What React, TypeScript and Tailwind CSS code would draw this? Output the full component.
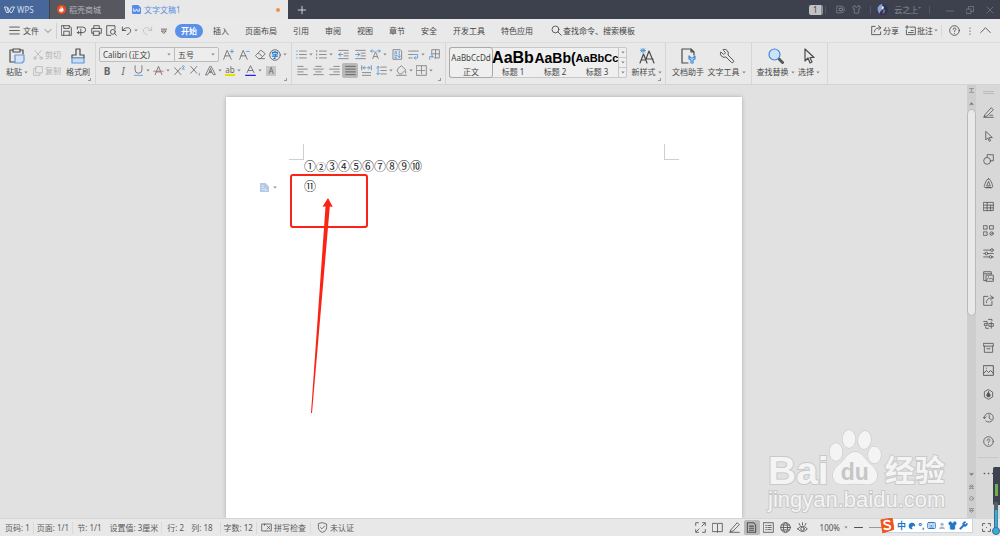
import React from "react";
import { Wrench, Shirt, Keyboard, Moon, User } from "lucide-react";

type Kids = { children?: React.ReactNode };

function Glyph({ className = "size-[11px]", children }: Kids & { className?: string }) {
  return (
    <svg
      viewBox="0 0 16 16"
      className={`shrink-0 ${className}`}
      fill="none"
      stroke="currentColor"
      strokeWidth="1.2"
      strokeLinecap="round"
      strokeLinejoin="round"
      aria-hidden="true"
    >
      {children}
    </svg>
  );
}

function Caret() {
  return (
    <svg viewBox="0 0 6 4" className="h-[3px] w-1 shrink-0" fill="#888" aria-hidden="true">
      <path d="M0.5 0.5h5L3 3.6z" />
    </svg>
  );
}

const BLUE = "#4d94dc";

function Tool({ label, caret, active, children }: Kids & { label: string; caret?: boolean; active?: boolean }) {
  return (
    <button
      aria-label={label}
      className={`flex h-[15px] shrink-0 items-center justify-center gap-0.5 ${caret ? "w-5" : "w-4"} ${active ? "rounded-xs bg-[#b9b9b9]" : ""}`}
    >
      {children}
      {caret && <Caret />}
    </button>
  );
}

function BigTool({ label, caret, className, children }: Kids & { label: string; caret?: boolean; className: string }) {
  return (
    <button className={`flex shrink-0 flex-col items-center gap-0.5 pt-[5px] text-[#4a4a4a] ${className}`}>
      {children}
      <span className="flex items-center gap-0.5 leading-3 whitespace-nowrap">
        {label}
        {caret && <Caret />}
      </span>
    </button>
  );
}

function Corner() {
  return <span className="absolute right-1 bottom-[3px] size-[3px] border-r border-b border-[#999]" />;
}

function TitleBar() {
  return (
    <header className="flex h-[19px] shrink-0 items-stretch bg-[#3d404d] text-[8px]">
      <button className="flex w-[49px] items-center gap-0.5 bg-[#47679b] pl-1 text-[#d4dcea]">
        <svg viewBox="0 0 22 16" className="h-2 w-[11px]" fill="none" stroke="currentColor" strokeWidth="2" aria-hidden="true">
          <path d="M1 2h5l3 11 6-11h6l-5 11h-3L7 2M1 2l4 11h4" />
        </svg>
        <span className="text-[8px]">WPS</span>
      </button>
      <button className="ml-px flex w-[75px] items-center gap-[3px] bg-[#56575f] pl-[7px] text-[#b5b5b8]">
        <svg viewBox="0 0 16 16" className="size-[9px]" aria-hidden="true">
          <circle cx="8" cy="8" r="8" fill="#f04a1c" />
          <path d="M8 2c1 2-1 3 0 5 1-1 1-2 2-3 2 3 3 9-2 9S3 9 5 6c0 1 1 2 1 2C6 6 6 4 8 2z" fill="#fff" />
          <path d="M4 11q4 4 8 0" stroke="#f04a1c" fill="none" />
        </svg>
        稻壳商城
      </button>
      <button className="flex w-[163px] items-center gap-[3px] bg-[#e8e8e8] pr-2 pl-[7px] text-[#5e8de0]">
        <svg viewBox="0 0 16 16" className="size-[9px]" aria-hidden="true">
          <path d="M2 0h9l5 5v9a2 2 0 0 1-2 2H2a2 2 0 0 1-2-2V2a2 2 0 0 1 2-2z" fill="#568bea" />
          <path d="M3 6v5h3l2-4 2 4h3V6" stroke="#fff" strokeWidth="1.5" fill="none" />
        </svg>
        <span className="grow text-left">文字文稿1</span>
        <span className="size-1 rounded-full bg-[#e99443]" />
      </button>
      <button aria-label="新建标签" className="flex w-[27px] items-center justify-center text-[#d0d0d4]">
        <Glyph className="size-2.5">
          <path d="M8 2v12M2 8h12" strokeWidth="1.6" />
        </Glyph>
      </button>
      <div className="ml-auto flex items-center text-[#898b94]">
        <span className="flex h-[10px] w-[14px] items-center justify-center rounded-xs border-r-2 border-[#8d8e95] bg-[#c2c2c4] text-[8px] text-[#444]">1</span>
        <span className="ml-0.5 h-2 w-px bg-[#555863]" />
        <button aria-label="稻壳" className="ml-1.5 flex w-4 justify-center">
          <Glyph className="size-[9px]">
            <path d="M2 2h7a6 6 0 0 1 0 12H2zM5 6h5M5 10h5" />
            <circle cx="9" cy="8" r="3" />
          </Glyph>
        </button>
        <button aria-label="皮肤" className="flex w-4 justify-center">
          <Shirt className="size-[9px]" />
        </button>
        <span className="mx-1.5 h-2 w-px bg-[#555863]" />
        <button className="flex items-center gap-1.5">
          <svg viewBox="0 0 16 16" className="size-[11px]" aria-hidden="true">
            <circle cx="8" cy="8" r="8" fill="#27365e" />
            <path d="M1 5q3-5 7-5-2 4 0 8-4 2-4 6Q0 11 1 5z" fill="#8ba3d0" />
            <path d="M7 3l3 1-1 4-2-1z" fill="#fff" />
            <path d="M9 7l3 2-1 4-3 1z" fill="#a95a63" />
          </svg>
          云之上⁺
        </button>
        <span className="ml-2 h-2 w-px bg-[#555863]" />
        <div className="ml-2.5 flex">
          <button aria-label="最小化" className="flex w-5 justify-center">
            <Glyph className="size-2"><path d="M1 10h14" /></Glyph>
          </button>
          <button aria-label="还原" className="flex w-5 justify-center">
            <Glyph className="size-2"><path d="M1 6h9v9H1zM5 6V1h10v10h-5" /></Glyph>
          </button>
          <button aria-label="关闭" className="flex w-5 justify-center">
            <Glyph className="size-2"><path d="M2 2l12 12M14 2L2 14" /></Glyph>
          </button>
        </div>
      </div>
    </header>
  );
}

const tabs = ["插入", "页面布局", "引用", "审阅", "视图", "章节", "安全", "开发工具", "特色应用"];

function MenuBar() {
  return (
    <nav className="flex h-6 shrink-0 items-center border-b border-[#dcdcdc] bg-[#e9e9e9] pr-[5px] pl-[9px] text-[8px] text-[#444]">
      <button className="flex items-center gap-[3px]">
        <Glyph><path d="M1 3h14M1 8h14M1 13h14" /></Glyph>
        文件
        <Glyph className="ml-0.5 size-2"><path d="M2 5l6 6 6-6" /></Glyph>
      </button>
      <span className="mx-1 h-4 w-px bg-[#d0d0d0]" />
      <div className="flex items-center gap-1">
        <button aria-label="保存">
          <Glyph><path d="M1 1h11l3 3v11H1zM4 1v4h8V1M4 15V9h8v6" /></Glyph>
        </button>
        <button aria-label="输出为PDF">
          <Glyph><path d="M2 3h8a4 4 0 0 1 0 8H7M7 6v9M2 3v3M4 9L2 11l2 2M2 11h5" /></Glyph>
        </button>
        <button aria-label="打印">
          <Glyph><path d="M4 5V1h8v4M4 12H1V5h14v7h-3M4 9h8v6H4z" /></Glyph>
        </button>
        <button aria-label="打印预览">
          <Glyph><path d="M7 15H1V1h12v5M12.500 12.500L15 15" /><circle cx="10" cy="10" r="3.500" /></Glyph>
        </button>
        <button aria-label="撤销" className="flex items-center gap-0.5">
          <Glyph><path d="M2 3v5h5M2 8c4-6 13-5 12 1-1 3-3 4-5 5" /></Glyph>
          <Caret />
        </button>
        <button aria-label="恢复" className="text-[#bdbdbd]">
          <Glyph><path d="M14 3v5H9M14 8C10 2 1 3 2 9c1 3 3 4 5 5" /></Glyph>
        </button>
        <button aria-label="自定义快速访问" className="flex w-2.5 justify-end">
          <Glyph className="size-1.5"><path d="M1 3h14M2 8h12l-6 6z" strokeWidth="2" /></Glyph>
        </button>
      </div>
      <button className="ml-2 h-3.5 rounded-full bg-[#5a8fea] px-1.5 text-[8px] font-bold text-white">开始</button>
      <div className="ml-2.5 flex gap-4">
        {tabs.map((t) => (
          <button key={t} className="whitespace-nowrap">{t}</button>
        ))}
      </div>
      <label className="ml-[18px] flex items-center gap-px">
        <Glyph><circle cx="6.500" cy="6.500" r="5" /><path d="M10 10l5 5" /></Glyph>
        <input aria-label="搜索" placeholder="查找命令、搜索模板" className="w-20 bg-transparent placeholder:text-[#444]" />
      </label>
      <div className="ml-auto flex items-center">
        <button className="flex items-center gap-px">
          <Glyph><path d="M6 2H1v12h13v-4M5 10c0-4 3-6 9-6M11 1l3.500 3L11 7" /></Glyph>
          分享
        </button>
        <button className="ml-1.5 flex items-center gap-px">
          <Glyph><path d="M7 3h8v11H2V7M1 3h4M3 1v4M5 11h7M9 8h3" /></Glyph>
          批注
          <Caret />
        </button>
        <span className="mx-[3px] h-3 w-px bg-[#d8d8d8]" />
        <button aria-label="帮助" className="px-1">
          <Glyph><circle cx="8" cy="8" r="7" /><path d="M6 6.500c0-3 4-3 4-.5 0 1.500-2 1.500-2 3.500M8 12v.2" /></Glyph>
        </button>
        <button aria-label="更多" className="px-0.5">
          <Glyph className="size-2"><path d="M8 2v.2M8 8v.2M8 14v.2" strokeWidth="2.400" /></Glyph>
        </button>
        <button aria-label="折叠功能区" className="px-1">
          <Glyph><path d="M1 11l7-7 7 7" /></Glyph>
        </button>
      </div>
    </nav>
  );
}

function ComboBox({ label, value, className }: { label: string; value: string; className: string }) {
  return (
    <label className={`flex items-center px-[3px] ${className}`}>
      <select aria-label={label} className="w-full min-w-0 appearance-none bg-transparent text-[8px] leading-3 text-[#444]">
        <option>{value}</option>
      </select>
      <Caret />
    </label>
  );
}

function FontGroup() {
  return (
    <div className="relative flex shrink-0 flex-col gap-px border-r border-[#d6d6d6] pt-1 pr-[3px] pl-[3px] text-[#666]">
      <div className="flex h-[15px] items-center">
        <div className="mr-px flex h-[15px] w-[120px] rounded-xs border border-[#bcbcbc] bg-[#ededed]">
          <ComboBox label="字体" value="Calibri (正文)" className="w-[75px] border-r border-[#bcbcbc]" />
          <ComboBox label="字号" value="五号" className="grow" />
        </div>
        <Tool label="增大字号">
          <Glyph><path d="M1 15L6 2l6 13M3 10h7" /><path d="M13 1v5M10.500 3.500h5" stroke={BLUE} /></Glyph>
        </Tool>
        <Tool label="减小字号">
          <Glyph><path d="M1 15L6 2l6 13M3 10h7" /><path d="M11 3.500h4" stroke={BLUE} /></Glyph>
        </Tool>
        <Tool label="清除格式">
          <Glyph><path d="M9 2l6 5-7 7H5L1 10zM5 6l6 5M6 14h8" /></Glyph>
        </Tool>
        <Tool label="拼音指南" caret>
          <Glyph className="size-3"><circle cx="8" cy="8" r="7" /><path d="M8 3v1.500M4.500 6.500v-2h7v2M6 7h4L8 9v3.500H6.500M4.500 9.500h7" stroke="#257bd0" strokeWidth="1.400" /></Glyph>
        </Tool>
      </div>
      <div className="flex h-[15px]">
        <Tool label="加粗"><span className="text-[10px] font-bold">B</span></Tool>
        <Tool label="倾斜"><span className="text-[10px] italic">I</span></Tool>
        <Tool label="下划线" caret>
          <Glyph><path d="M3 1v6a5 5 0 0 0 10 0V1" /><path d="M2 15h12" stroke={BLUE} /></Glyph>
        </Tool>
        <Tool label="删除线" caret>
          <Glyph><path d="M3 14L8 2l5 12M5 10h6" /><path d="M1 9h14" stroke="#d5605d" /></Glyph>
        </Tool>
        <Tool label="上标">
          <Glyph><path d="M1 4l9 10M10 4L1 14" /><path d="M12 2q3-2 3 0l-3 4h3" stroke={BLUE} /></Glyph>
        </Tool>
        <Tool label="下标">
          <Glyph><path d="M1 2l9 10M10 2L1 12" /><path d="M13.500 12v3" stroke={BLUE} /></Glyph>
        </Tool>
        <Tool label="文字效果" caret>
          <Glyph><path d="M1 14L7 2h2l6 12h-3l-1.500-3h-5L4 14zM6.500 9L8 5l1.500 4z" /></Glyph>
        </Tool>
        <Tool label="突出显示" caret>
          <span className="border-b-2 border-[#e6e000] text-[8px] leading-[9px]">ab</span>
        </Tool>
        <Tool label="字体颜色" caret>
          <Glyph><path d="M3 11L8 1l5 10M5 8h6" /><path d="M1 15h14" stroke="#2323ee" strokeWidth="2" /></Glyph>
        </Tool>
        <Tool label="字符底纹"><span className="bg-[#c6c6c6] px-0.5 text-[8px] leading-[10px]">A</span></Tool>
      </div>
      <Corner />
    </div>
  );
}

function ParagraphGroup() {
  return (
    <div className="relative flex w-[154px] shrink-0 flex-col gap-px border-r border-[#d6d6d6] px-0.5 pt-1 text-[#7a7a7a]">
      <div className="flex justify-between">
        <Tool label="项目符号" caret>
          <Glyph><path d="M5 3h10M5 8h10M5 13h10" /><path d="M1 3h1M1 8h1M1 13h1" stroke={BLUE} /></Glyph>
        </Tool>
        <Tool label="编号" caret>
          <Glyph><path d="M5 3h10M5 8h10M5 13h10M1 2v2M1 7v2M1 12v2" /></Glyph>
        </Tool>
        <Tool label="减少缩进">
          <Glyph><path d="M1 2h14M9 6h6M9 10h6M1 14h14" /><path d="M7 8H1M4 5.500L1 8l3 2.500" stroke={BLUE} /></Glyph>
        </Tool>
        <Tool label="增加缩进">
          <Glyph><path d="M1 2h14M9 6h6M9 10h6M1 14h14" /><path d="M1 8h6M4 5.500L7 8l-3 2.500" stroke={BLUE} /></Glyph>
        </Tool>
        <Tool label="字符缩放" caret>
          <Glyph><path d="M4 14L8 4l4 10M5.500 11h5" /><path d="M1 3h5M3 1L1 3l2 2M15 3h-5M13 1l2 2-2 2" stroke={BLUE} /></Glyph>
        </Tool>
        <Tool label="排序">
          <Glyph><path d="M2 1h10l2 2v12H2z" /><path d="M4 7l1.500-4L7 7M4 9h3l-3 4h3M10.500 3v9M8.500 10l2 2.500 2-2.500" stroke={BLUE} /></Glyph>
        </Tool>
        <Tool label="显示标记" caret>
          <Glyph><path d="M1 3h14M1 8h6M1 13h5" /><path d="M8 8h6v5H9M11 11l-2 2 2 2" stroke={BLUE} /></Glyph>
        </Tool>
        <Tool label="制表位">
          <Glyph><path d="M4 8V1h11v12H8M4 7h11M9.500 1v12" /><path d="M1 15v-4h5M4 9l2 2-2 2" stroke={BLUE} /></Glyph>
        </Tool>
      </div>
      <div className="flex">
        <Tool label="左对齐"><Glyph><path d="M1 2h8M1 6h14M1 10h8M1 14h14" /></Glyph></Tool>
        <Tool label="居中"><Glyph><path d="M4 2h8M1 6h14M4 10h8M1 14h14" /></Glyph></Tool>
        <Tool label="右对齐"><Glyph><path d="M7 2h8M1 6h14M7 10h8M1 14h14" /></Glyph></Tool>
        <Tool label="两端对齐" active><Glyph><path d="M1 2h14M1 6h14M1 10h14M1 14h14" stroke="#555" /></Glyph></Tool>
        <Tool label="分散对齐">
          <Glyph><path d="M1 1v6M15 1v6M2 11h12M2 15h12" /><path d="M3 4h4M9 4h4M5 2L3 4l2 2M11 2l2 2-2 2" stroke={BLUE} /></Glyph>
        </Tool>
        <Tool label="行距" caret>
          <Glyph><path d="M7 3h8M7 8h8M7 13h8" /><path d="M3 2v12M1 4l2-2 2 2M1 12l2 2 2-2" stroke={BLUE} /></Glyph>
        </Tool>
        <Tool label="底纹颜色" caret>
          <Glyph><path d="M3 5l5-4 6 6-6 6H5L2 9zM1 15h14M14 9v3" /></Glyph>
        </Tool>
        <Tool label="边框" caret>
          <Glyph><path d="M1 1h14v14H1z" /><path d="M8 2v12M2 8h12" strokeDasharray="1.500 1.500" /></Glyph>
        </Tool>
      </div>
      <Corner />
    </div>
  );
}

const styles = [
  { name: "正文", sample: "AaBbCcDd", look: "text-[8px]" },
  { name: "标题 1", sample: "AaBb", look: "text-[16px] font-bold text-black font-['Liberation_Sans',sans-serif]" },
  { name: "标题 2", sample: "AaBb(", look: "text-[14px] font-bold text-black font-['Liberation_Sans',sans-serif]" },
  { name: "标题 3", sample: "AaBbCc", look: "text-[11px] font-bold text-black font-['Liberation_Sans',sans-serif]" },
];

function StyleGroup() {
  return (
    <div className="relative flex shrink-0 gap-1 border-r border-[#d6d6d6] pr-[3px] pl-[3px]">
      <div className="mt-1 flex h-[31px] rounded-xs border border-[#c8c8c8] bg-[#efefef]">
        {styles.map((s, i) => (
          <button
            key={s.name}
            className={`flex w-[42px] flex-col items-center ${i === 0 ? "rounded-xs outline outline-[#aaa]" : ""}`}
          >
            <span className={`h-[18px] leading-[20px] whitespace-nowrap ${s.look}`}>{s.sample}</span>
            <span className="leading-[11px]">{s.name}</span>
          </button>
        ))}
        <div className="flex w-2 flex-col divide-y divide-[#c8c8c8] border-l border-[#c8c8c8]">
          <button aria-label="上一行" className="flex grow items-center justify-center"><Caret /></button>
          <button aria-label="下一行" className="flex grow items-center justify-center"><Caret /></button>
          <button aria-label="更多样式" className="flex grow items-center justify-center"><Caret /></button>
        </div>
      </div>
      <BigTool label="新样式" caret className="w-[31px]">
        <Glyph className="size-4">
          <path d="M1 15l3.500-9L8 15M2.500 12h4M7 11l3-8 5 12M8 11h6" />
          <path d="M4 0v5M1.500 2.500h5M2 1l4 3M6 1L2 4" stroke={BLUE} strokeWidth=".9" />
        </Glyph>
      </BigTool>
      <Corner />
    </div>
  );
}

function Ribbon() {
  return (
    <section className="flex h-[42px] shrink-0 border-b border-[#d4d4d4] bg-[#e9e9e9] text-[8px] text-[#444]">
      <div className="relative flex w-24 shrink-0 border-r border-[#d6d6d6] pl-1">
        <BigTool label="粘贴" caret className="w-[26px]">
          <Glyph className="size-4">
            <path d="M4 2H1v12h5M11 2h3v4M4 1h7v3H4z" />
            <path d="M6 7h9v6l-2 2H6z" stroke="#6598d8" fill="#d6e4f5" />
          </Glyph>
        </BigTool>
        <div className="flex w-8 flex-col gap-px pt-1 pl-[3px] text-[#b2b2b2]">
          <button className="flex h-[15px] items-center gap-0.5">
            <Glyph className="size-2.5"><circle cx="3" cy="13" r="2" /><circle cx="13" cy="13" r="2" /><path d="M4 11L13 1M12 11L3 1" /></Glyph>
            剪切
          </button>
          <button className="flex h-[15px] items-center gap-0.5">
            <Glyph className="size-2.5"><path d="M5 1h10v10H5zM5 4H1v11h10v-4" /></Glyph>
            复制
          </button>
        </div>
        <BigTool label="格式刷" className="w-8">
          <Glyph className="size-4">
            <path d="M6 7V1h4v6h4v3H2V7z" />
            <path d="M2 10v5h12v-5z" stroke="#6598d8" fill="#c8ddf5" />
          </Glyph>
        </BigTool>
        <Corner />
      </div>
      <FontGroup />
      <ParagraphGroup />
      <StyleGroup />
      <div className="flex shrink-0 border-r border-[#d6d6d6] pr-1 pl-1">
        <BigTool label="文档助手" className="w-9">
          <Glyph className="size-4">
            <path d="M8 15H2V1h9l3 3v3M11 1v3h3" />
            <path d="M9 8v3l2 1v3h2v-3l2-1V8l-2 2h-2z" stroke="#4189d8" fill="#d6e4f5" />
          </Glyph>
        </BigTool>
        <BigTool label="文字工具" caret className="w-[41px]">
          <Wrench className="size-4 -scale-x-100" strokeWidth={1.4} />
        </BigTool>
      </div>
      <div className="flex shrink-0 border-r border-[#d6d6d6] pr-1 pl-1">
        <BigTool label="查找替换" caret className="w-[39px]">
          <Glyph className="size-4">
            <circle cx="6.500" cy="6.500" r="5.500" stroke="#4189d8" fill="#cfe1f5" />
            <path d="M10.500 11.500l4 4 1-1-4-4" />
          </Glyph>
        </BigTool>
        <BigTool label="选择" caret className="w-7">
          <Glyph className="size-4"><path d="M4 1v12l3-3 2 5 2-1-2-4.500h4z" /></Glyph>
        </BigTool>
      </div>
    </section>
  );
}

function Page() {
  return (
    <article className="relative mx-auto h-full w-[516px] bg-white pt-[47px] shadow-[0_0_4px_#aaa]">
      <div className="flex h-4 justify-between px-[63px]">
        <span className="w-[15px] border-r border-b border-[#cfcfcf]" />
        <span className="w-[15px] border-b border-l border-[#cfcfcf]" />
      </div>
      <p className="flex h-[14px] items-center pl-[78px] text-[12px] leading-3 text-[#222]">
        ①<span className="text-[10px]">②</span>③④⑤⑥⑦⑧⑨⑩
      </p>
      <div className="mt-1.5 flex h-[14px] items-center pl-[34px]">
        <button aria-label="段落布局" className="flex w-11 items-center gap-1">
          <svg viewBox="0 0 16 16" className="size-[9px]" aria-hidden="true">
            <path d="M0 0h10l6 6v10H0z" fill="#b4c9e8" />
            <path d="M3 5h4M3 8h3M3 12h5M9 9v4h4" stroke="#fff" fill="none" />
          </svg>
          <Caret />
        </button>
        <p className="text-[12px] leading-3 text-[#222]">⑪</p>
      </div>
      <svg viewBox="0 0 80 242" className="absolute top-[77px] left-[64px] h-[242px] w-20" aria-hidden="true">
        <rect x="1" y="1" width="76" height="52" rx="2" fill="none" stroke="#fb2314" strokeWidth="2" />
        <path d="M38 24l4.800 9-3-.4L22 239h-1l14.500-206.500-3 .3z" fill="#fb2314" />
      </svg>
    </article>
  );
}

function Watermark() {
  return (
    <div className="absolute right-[21px] bottom-[4px] w-[178px] text-[#f4f4f4] [-webkit-text-stroke:2px_#c9c9c9] [paint-order:stroke_fill]">
      <div className="flex h-[62px] items-end">
        <span className="font-['Liberation_Sans',sans-serif] text-[39px] leading-[30px] font-bold">Bai</span>
        <span className="relative flex h-[62px] w-[56px] items-end justify-center">
          <svg viewBox="0 0 56 62" className="absolute inset-0 size-full" fill="#f4f4f4" stroke="#c4c4c4" aria-hidden="true">
            <path d="M26 28c7 0 9 6 14 11 6 5 9 9 8 14-1 6-6 8-12 7.500-7-1-13-1-20 0-6 .5-11-1.500-12-7.500-1-5 2-9 8-14 5-5 7-11 14-11z" />
            <ellipse cx="7" cy="28" rx="6.500" ry="9" />
            <ellipse cx="20" cy="15" rx="6.500" ry="9" />
            <ellipse cx="35.500" cy="16" rx="6.500" ry="9" transform="rotate(8 35.500 16)" />
            <ellipse cx="45.500" cy="31" rx="6.500" ry="8.500" />
          </svg>
          <span className="relative pr-1 pb-0.5 font-['Liberation_Sans',sans-serif] text-[23px] leading-6 font-bold text-[#c6c6c6] [-webkit-text-stroke:0]">du</span>
        </span>
        <span className="text-[30px] leading-8 font-bold whitespace-nowrap">经验</span>
      </div>
      <div className="font-['Liberation_Sans',sans-serif] text-[22px] leading-7">jingyan.baidu.com</div>
    </div>
  );
}

const sideTools: { label: string; art: React.ReactNode }[] = [
  { label: "编辑", art: <path d="M3 11L12 1l3 3-9 9-4 1zM1 15h14M10 12h4" /> },
  { label: "选择", art: <path d="M4 1v12l3-3 2 5 2-1-2-4.500h4z" /> },
  { label: "形状", art: <><path d="M6 5V1h9v9h-4" /><circle cx="6" cy="10" r="5" /></> },
  { label: "样式", art: <><path d="M8 1c2 0 3 3 5 7 2 5 1 6-1 6H4c-2 0-3-1-1-6 2-4 3-7 5-7z" /><path d="M5.500 11L8 5l2.500 6zM4 14h8" /></> },
  { label: "表格", art: <path d="M1 2h14v12H1zM1 6h14M1 10h14M6 2v12M11 6v8" /> },
  { label: "组件", art: <><path d="M1 1h5v5H1zM10 1h5v5h-5zM1 10h5v5H1z" /><circle cx="12.500" cy="12.500" r="2.500" /><path d="M11 14l3-3" /></> },
  { label: "设置", art: <><path d="M1 3h10M1 8h2M7 8h8M1 13h8M13 13h2" /><circle cx="13" cy="3" r="2" /><circle cx="5" cy="8" r="2" /><circle cx="11" cy="13" r="2" /></> },
  { label: "素材库", art: <path d="M5 14H1V1h11v4M1 4h11M5 6h10v9H5zM5 13l3-3 2 2 2-2 3 3M8 8v.2" /> },
  { label: "分享", art: <path d="M7 2H1v13h12V9M5 11c0-5 3-7 10-7M11 1l4 3-4 3" /> },
  { label: "翻译", art: <path d="M1 5h5v6H2V8h4M9 8h6v4H9zM12 6v9M8 2h5v2M4 13v2h4" /> },
  { label: "归档", art: <path d="M1 2h14v4H1zM2 6v9h12V6M6 9v1h4V9" /> },
  { label: "图片", art: <path d="M1 1h14v14H1zM1 12l4-4 3 3 3-3 4 4M5 4.500v.2" strokeWidth="1.400" /> },
  { label: "推荐", art: <><path d="M8 1l6 3.500v7L8 15l-6-3.500v-7z" /><path d="M8 4c0 3 3 3 2.500 6-1 2-4 2-5 0C5 8 7 7 8 4z" fill="currentColor" /></> },
  { label: "历史", art: <path d="M2 9a6.500 6.500 0 1 1 2 4M0 7l2 2.500L4.500 7M9 4v5l3 2" /> },
  { label: "帮助", art: <><circle cx="8" cy="8" r="7" /><path d="M6 6.500c0-3 4-3 4-.5 0 1.500-2 1.500-2 3.500M8 12v.2" /></> },
];

function Workspace() {
  return (
    <main className="flex min-h-0 grow">
      <div className="relative min-w-0 grow overflow-hidden bg-[#e1e1e1] pt-3 pl-px">
        <Page />
        <Watermark />
      </div>
      <div className="flex w-[9px] shrink-0 flex-col items-center bg-[#cecece] text-[#777]">
        <Glyph className="mt-[3px] size-[5px]"><path d="M1 2h14M8 3v8M1 14h14" strokeWidth="2" /></Glyph>
        <Glyph className="mt-2 size-[5px]"><path d="M2 11l6-6 6 6z" fill="currentColor" /></Glyph>
        <div className="mt-[3px] h-[207px] w-[9px] rounded-full border border-[#b9b9b9] bg-[#e9e9e9]" />
        <div className="mt-auto mb-[5px] flex flex-col items-center gap-[7px]">
          <Glyph className="size-[5px]"><path d="M2 5l6 6 6-6z" fill="currentColor" /></Glyph>
          <Glyph className="size-[5px]"><path d="M2 7l6-5 6 5zM2 14l6-5 6 5z" strokeWidth="2" /></Glyph>
          <Glyph className="size-[5px]"><circle cx="8" cy="8" r="6" strokeWidth="2" /></Glyph>
          <Glyph className="size-[5px]"><path d="M2 2l6 5 6-5zM2 9l6 5 6-5z" strokeWidth="2" /></Glyph>
        </div>
      </div>
      <aside className="flex w-6 shrink-0 flex-col items-center bg-[#d8d8d8] text-[#555]">
        <span className="mt-1.5 h-[3px] w-[11px] shrink-0 border-y border-[#bbb]" />
        <div className="mt-[7px] grid h-[352px] auto-rows-fr">
          {sideTools.map((t) => (
            <button key={t.label} aria-label={t.label} className="flex w-6 items-center justify-center">
              <Glyph>{t.art}</Glyph>
            </button>
          ))}
        </div>
        <span className="mt-1 h-px w-5 bg-[#c8c8c8]" />
        <button aria-label="更多工具" className="mt-2.5">
          <Glyph><path d="M2 8h.2M8 8h.2M14 8h.2" strokeWidth="2.400" /></Glyph>
        </button>
      </aside>
    </main>
  );
}

function Divider() {
  return <span className="h-3 w-px bg-[#dadada]" />;
}

function ImeBar() {
  return (
    <div className="absolute right-[27px] bottom-[3px] flex h-[15px] w-[90px] items-center justify-between border border-[#c9d6e2] bg-white pr-1 pl-[13px] text-[#1f78c9]">
      <svg viewBox="0 0 16 16" className="absolute -top-px -left-[5px] size-[15px]" aria-hidden="true">
        <path d="M2 2l12-2 2 12-12 4z" fill="#f1531f" strokeLinejoin="round" stroke="#f1531f" />
        <path d="M12 4c-3-2-7-1-6.500 1.500C6 8 12 6.500 12 9.500c0 3-5 3-7 1.500" stroke="#fff" strokeWidth="2" fill="none" />
      </svg>
      <span className="text-[9px] leading-3 font-bold">中</span>
      <Moon className="size-2 rotate-90" fill="currentColor" />
      <span className="text-[9px] leading-3 font-bold">°,</span>
      <Keyboard className="size-[9px]" strokeWidth={2.6} />
      <User className="size-2 text-[#a9bacb]" fill="currentColor" />
      <Shirt className="size-[9px]" fill="currentColor" />
      <Wrench className="size-[9px]" fill="currentColor" />
    </div>
  );
}

function Gauge() {
  return (
    <svg viewBox="0 0 8 70" className="absolute right-0 bottom-0 h-[70px] w-2" aria-hidden="true">
      <rect x="1" y="1" width="8" height="38" rx="1.500" fill="#3c4250" />
      <rect x="3" y="18" width="3" height="12" fill="#6fae4c" />
      <rect x="2" y="36" width="4" height="28" rx="1" fill="#55616d" />
      <rect x="3" y="44" width="2.500" height="20" fill="#2db1e3" />
      <circle cx="4" cy="65" r="3.500" fill="#2db1e3" stroke="#536a78" />
    </svg>
  );
}

function StatusBar() {
  return (
    <footer className="flex h-[18px] shrink-0 items-center border-t border-[#d6d6d6] bg-[#e8e8e8] pl-[5px] text-[8px] whitespace-nowrap text-[#5b5b5b]">
      <div className="flex items-center gap-[3px]">
        <span>页码: 1</span>
        <Divider />
        <span>页面: 1/1</span>
        <Divider />
        <span className="pl-px">节: 1/1</span>
        <span className="pl-[5px]">设置值: 3厘米</span>
        <Divider />
        <span className="pl-0.5">行: 2</span>
        <span className="px-1">列: 18</span>
        <Divider />
        <span>字数: 12</span>
        <Divider />
        <button className="flex items-center gap-0.5 px-px">
          <Glyph><path d="M7 3H1v10h6M7 3h8v10H7M5 3v2M9 6l4 4M13 6l-4 4" /></Glyph>
          拼写检查
        </button>
        <Divider />
        <button className="flex items-center gap-0.5 px-[3px]">
          <Glyph><path d="M8 1l6 2v5c0 4-3 6-6 7-3-1-6-3-6-7V3zM5 8l2 2 4-4" /></Glyph>
          未认证
        </button>
      </div>
      <div className="ml-auto flex items-center text-[#505050]">
        <div className="flex items-center gap-px">
          <Tool label="全屏"><Glyph><path d="M1 5V1h4M11 1h4v4M15 11v4h-4M5 15H1v-4M10 6l4-4M6 10l-4 4" /></Glyph></Tool>
          <Tool label="阅读版式"><Glyph><path d="M8 3v12M1 2h6l1 1 1-1h6v12H1z" /></Glyph></Tool>
          <Tool label="写作模式"><Glyph><path d="M3 11L12 1l3 3-9 9-4 1zM1 15h14" /></Glyph></Tool>
          <Tool label="页面视图" active><Glyph><path d="M2 1h9l3 3v11H2zM5 6h6M5 9h6M5 12h6" strokeWidth="1.500" /></Glyph></Tool>
          <Tool label="大纲"><Glyph><path d="M1 1h14v14H1zM4 5h1M7 5h5M4 8h1M7 8h5M4 11h1M7 11h5" /></Glyph></Tool>
          <Tool label="Web版式"><Glyph><circle cx="8" cy="8" r="7" /><ellipse cx="8" cy="8" rx="3" ry="7" /><path d="M1 8h14M2 4.500h12M2 11.500h12" /></Glyph></Tool>
          <Tool label="护眼模式"><Glyph><path d="M1 10q7-8 14 0-7 8-14 0zM8 1v3M3 2l1.500 3M13 2l-1.500 3" /><circle cx="8" cy="10" r="2.500" /></Glyph></Tool>
        </div>
        <span className="mr-1.5 ml-[3px]"><Divider /></span>
        <button className="flex items-center gap-1 text-[8px]">100%<Caret /></button>
        <button aria-label="缩小" className="ml-1.5"><Glyph className="size-[9px]"><path d="M1 8h14" strokeWidth="2" /></Glyph></button>
        <input type="range" aria-label="显示比例" defaultValue={50} className="mr-[15px] ml-1.5 h-px w-[98px] appearance-none bg-[#9a9a9a] [&::-webkit-slider-thumb]:appearance-none" />
        <button aria-label="适应窗口" className="mr-[9px]"><Glyph className="size-[9px]"><path d="M1 5V1h4M11 1h4v4M15 11v4h-4M5 15H1v-4M8 8v.2" strokeWidth="1.500" /></Glyph></button>
      </div>
    </footer>
  );
}

export default function App() {
  return (
    <div className="relative flex h-screen flex-col overflow-hidden font-['Noto_Sans','Noto_Sans_CJK_SC',sans-serif] leading-3">
      <TitleBar />
      <MenuBar />
      <Ribbon />
      <Workspace />
      <StatusBar />
      <ImeBar />
      <Gauge />
    </div>
  );
}
